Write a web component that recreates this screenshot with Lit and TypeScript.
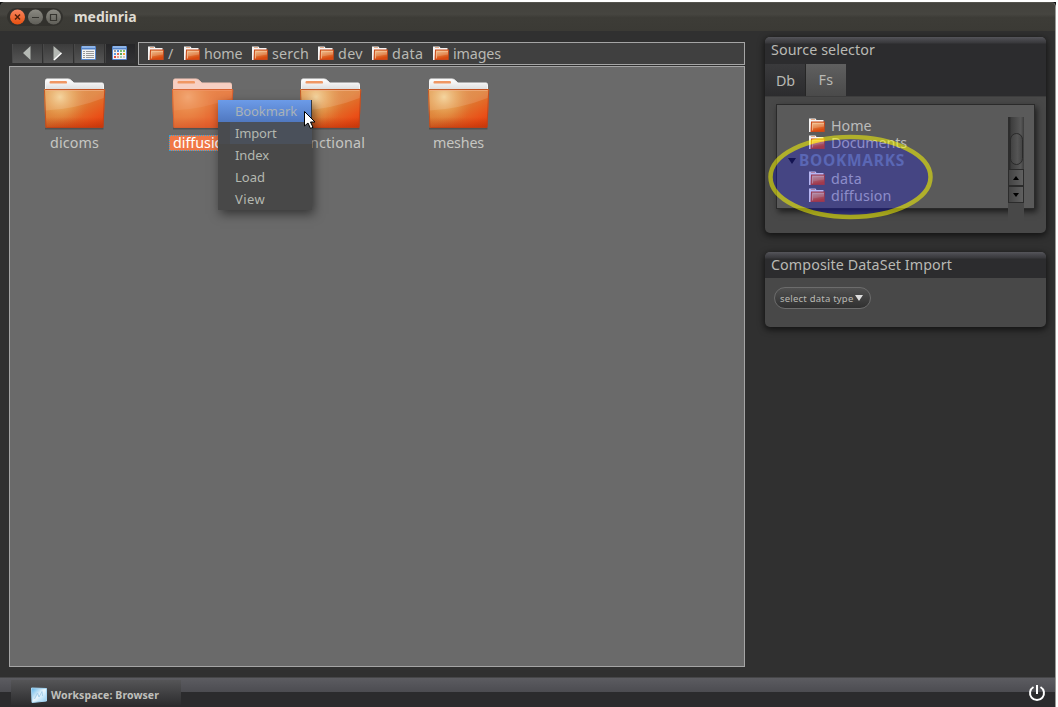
import { LitElement, html, css, svg, nothing } from "lit";
import { customElement, property } from "lit/decorators.js";

/* A single line of text whose tracking is adjusted to fill a given width. */
@customElement("fit-text")
class FitText extends LitElement {
  @property() text = "";
  @property({ type: Number }) w = 0;
  static styles = css`
    :host { display: inline-block; white-space: nowrap; flex: none; }
    .t { display: inline-block; white-space: pre; }
  `;
  updated() {
    const s = this.renderRoot.querySelector(".t") as HTMLElement;
    s.style.letterSpacing = "0px";
    const natural = s.getBoundingClientRect().width;
    s.style.letterSpacing = `${(this.w - natural) / this.text.length}px`;
  }
  render() {
    return html`<span class="t">${this.text}</span>`;
  }
}

@customElement("big-folder")
class BigFolder extends LitElement {
  @property({ type: Boolean }) selected = false;
  static styles = css`
    :host { display: block; width: 64px; height: 54px; margin-right: 1px; }
    svg { display: block; }
  `;
  render() {
    return html`<svg width="64" height="54" viewBox="0 0 64 54">
      <defs>
        <linearGradient id="l" x1="0" y1="0" x2="1" y2="1">
          <stop offset="0" stop-color="#d9913f" /><stop offset=".5" stop-color="#de7a31" />
          <stop offset=".8" stop-color="#ea4f17" /><stop offset="1" stop-color="#d93d0c" />
        </linearGradient>
        <radialGradient id="g" gradientUnits="userSpaceOnUse" cx="18" cy="20" r="30">
          <stop offset="0" stop-color="#f3cf92" /><stop offset=".5" stop-color="#e8a558" stop-opacity=".65" />
          <stop offset="1" stop-color="#e07a38" stop-opacity="0" />
        </radialGradient>
        <linearGradient id="d" x1="0" y1="0" x2="0" y2="1">
          <stop offset=".72" stop-color="#b02a05" stop-opacity="0" /><stop offset="1" stop-color="#b02a05" stop-opacity=".5" />
        </linearGradient>
        <linearGradient id="p" x1="0" y1="0" x2="0" y2="1">
          <stop offset="0" stop-color="#fff" /><stop offset="1" stop-color="#dcdcdc" />
        </linearGradient>
      </defs>
      <path d="M3 50.500H61.5V52.500H3Z" fill="#000" opacity=".22" />
      <path d="M3.500 13V3.500q0-1.500 1.500-1.500H26q2 0 3.300 1.500l2.600 2.500H60q1.500 0 1.500 1.500V13Z"
        fill=${this.selected ? "#f7cfc2" : "url(#p)"} stroke=${this.selected ? "#f7c8b8" : "#f5f5f5"} />
      <rect x="7.500" y="4" width="17.5" height="2.6" rx="1.2" fill="#f09763" />
      <path d="M2 13.3q-.1-1.3 1.2-1.3H62q1.3 0 1.2 1.3L61.500 49.500q-.1 1.500-1.500 1.500H5q-1.500 0-1.600-1.500Z" fill="url(#l)" />
      <path d="M2 13.3q-.1-1.3 1.2-1.3H62q1.3 0 1.2 1.3L61.500 49.500q-.1 1.500-1.500 1.500H5q-1.500 0-1.600-1.500Z" fill="url(#g)" />
      <path d="M2 13.3q-.1-1.3 1.2-1.3H62q1.3 0 1.2 1.3L61.500 49.500q-.1 1.500-1.500 1.500H5q-1.500 0-1.600-1.500Z" fill="url(#d)" />
      <path d="M3 13H62.300L61.700 21Q34 32 3.500 33.500Z" fill="#fff" opacity=".13" />
      <path d="M2.500 13.500q-.1-1 1-1H61.700q1.200 0 1 1L61 49.500q-.1 1-1.200 1H5.200q-1.200 0-1.300-1Z" fill="none"
        stroke="#b8411b" stroke-opacity=".75" />
      <path d="M4 13.500H61.500" stroke="#f2b184" opacity=".7" />
      ${this.selected
        ? svg`<path d="M2 13q0-1 1.200-1H62q1.200 0 1.200 1.300L61.500 49.500q0 1.500-1.500 1.500H5q-1.500 0-1.600-1.500Z" fill="#f07746" opacity=".5"/>`
        : nothing}
    </svg>`;
  }
}

@customElement("small-folder")
class SmallFolder extends LitElement {
  static styles = css`
    :host { display: block; width: 17px; height: 15px; flex: none; }
    svg { display: block; }
  `;
  render() {
    return html`<svg width="17" height="15" viewBox="0 0 17 15">
      <defs>
        <linearGradient id="a" x1="0" y1="0" x2=".3" y2="1">
          <stop offset="0" stop-color="#f0b77c" /><stop offset=".55" stop-color="#e07a3a" />
          <stop offset="1" stop-color="#d84a10" />
        </linearGradient>
      </defs>
      <path d="M0 14V.5H6.500L7.500 2H14.500V4H3V14Z" fill="#f4f4f4" />
      <path d="M2 1.500H6" stroke="#e9b08e" />
      <path d="M2 3.500H16L15.700 14H1.500Z" fill="#c9481a" />
      <path d="M3 4.500H15V13H2.500Z" fill="url(#a)" />
      <path d="M3.500 12.500V5.500H15" fill="none" stroke="#f6cda9" stroke-opacity=".65" />
      <path d="M4 6H15V8.500Q9 9.500 4 10.500Z" fill="#fff" opacity=".16" />
    </svg>`;
  }
}

@customElement("app-root")
class AppRoot extends LitElement {
  static styles = css`
    :host {
      display: block; position: relative; width: 1058px; height: 707px; overflow: hidden; background: #fff;
      font-family: "Noto Sans", "Open Sans", sans-serif; font-size: 14.300px; color: #b9b9b4;
    }
    * { box-sizing: border-box; }
    svg { display: block; flex: none; }
    .wrap { background: #111; width: 1056px; height: 705px; margin-top: 2px; }
    .window {
      width: 1056px; height: 705px; background: #303030; border-right: 1px solid #9a9a98;
      display: flex; flex-direction: column; border-radius: 5px 5px 0 0;
    }
    .title {
      height: 29px; flex: none; display: flex; align-items: center; padding: 0 0 1px 7px;
      background: linear-gradient(#43423d 0, #464540 40%, #3d3c37 52%, #3b3a35 100%);
      border-top: 1px solid #55544e; border-radius: 5px 5px 0 0;
    }
    .caps { width: 56px; height: 18px; border-radius: 9px; background: #32312d; padding: 1px 2px; }
    .name { font-weight: 700; font-size: 14px; color: #dfdbd2; margin-left: 11px; line-height: 18px; padding-top: 1px; }
    .body { flex: 1; min-height: 0; display: flex; padding: 6px 9px 0 9px; justify-content: space-between; }
    .left { width: 736px; padding-top: 5px; }
    .bar { display: flex; height: 24px; }
    .btns { width: 129px; display: flex; gap: 1px; padding: 2px 0 0 3px; }
    .btn {
      width: 30px; height: 19px; display: grid; place-items: center; padding-right: 2px;
      background: linear-gradient(#3c3c3c, #565656); border-left: 1px solid #484848;
    }
    .btn svg { margin-top: -1px; }
    .btn.on { background: linear-gradient(#262628, #333335); border-left-color: #444; }
    .path {
      flex: 1; border: 1px solid #a5a5a5; height: 23px; background: #404040; display: flex; align-items: center;
      padding-left: 9px; line-height: 20px;
    }
    .crumb { display: flex; align-items: center; gap: 3px; }
    .crumb small-folder { margin-top: -1px; }
    .crumb fit-text { padding-top: 1px; }
    .files {
      height: 601px; border: 1px solid #a5a5a5; background: #6a6a6a; display: grid;
      grid-template-columns: repeat(4, 128px); padding: 10px 0 0 0; align-content: start;
    }
    .file { display: flex; flex-direction: column; align-items: center; line-height: 16px; gap: 4px; color: #c6c6c2; }
    .lab { padding: 0 3px 0 4px; height: 16px; display: flex; align-items: center; }
    .lab.sel { background: #f07746; color: #fff; outline: 1px dotted #2ba5e0; outline-offset: -1px; }
    .right { width: 281px; display: flex; flex-direction: column; gap: 19px; }
    .panel {
      border-radius: 5px; background: #484848; box-shadow: 0 2px 6px 1px rgba(0, 0, 0, .6); overflow: hidden; flex: none;
    }
    .p1 { height: 196px; }
    .p2 { height: 75px; }
    .head {
      height: 26px; padding: 3px 0 0 6px; line-height: 20px; 
      background: linear-gradient(#55555a 0, #4a4a4f 2px, #38383b 6px, #2c2c2e 7px, #2c2c2e 100%);
    }
    .tabs { height: 34px; display: flex; background: #2c2c2e; border-bottom: 1px solid #3d3d3d; padding-top: 1px; }
    .tab { width: 41px; height: 32px; display: grid; place-items: center; line-height: 20px; padding-top: 1px;
      background: linear-gradient(#3a3a3c, #2c2c2e); }
    .tab.on { margin-left: -1px; background: linear-gradient(#606060, #4a4a4a); border-left: 1px solid #262626; padding: 0 0 1px; }
    .tree {
      margin: 7px 11px 0 11px; height: 105px; background: #5a5a5a; border: 1px solid #2a2a2a;
      box-shadow: 2px 3px 6px rgba(0, 0, 0, .6); display: flex; justify-content: space-between;
    }
    .rows { padding: 12px 0 0 32px; }
    .row { display: flex; align-items: center; gap: 5px; height: 17px; line-height: 17px; color: #bcbcbc; }
    .group { margin: 1px 0 1px -21px; gap: 3px; color: #76889e; font-weight: 700; font-size: 15.500px; }
    .scroll {
      width: 16px; height: 104px; margin: 12px 10px -12px 0; display: flex; flex-direction: column; flex: none;
      background: linear-gradient(90deg, #2c2c2c 0, #2c2c2c 2px, #3d3d3d 3px, #585858 80%, #3c3c3c 100%);
    }
    .thumb {
      height: 32px; margin: 16px 1px 4px 2px; border: 1px solid #2a2a2a; border-radius: 7px;
      background: linear-gradient(90deg, #424242, #555 60%, #454545);
    }
    .arrow { height: 17px; display: grid; place-items: center; border: 1px solid #2b2b2b; background: linear-gradient(90deg, #444, #606060); }
    .rest { flex: 1; background: #484848; }
    .combo {
      margin: 9px 0 0 9px; width: 97px; height: 22px; border: 1px solid #6c6c6c; border-radius: 11px; display: flex;
      align-items: center; padding: 1px 0 0 5px; gap: 2px; font-size: 9.500px; line-height: 14px;
      background: linear-gradient(#505050, #303030);
    }
    .combo svg { margin: -2px 0 0 -1px; }
    .foot {
      height: 30px; flex: none; display: flex; justify-content: space-between; padding: 3px 9px 0 11px;
      border-top: 1px solid #464648;
      background: linear-gradient(#5c5c61 0, #4c4c51 14px, #2b2b2d 14px);
    }
    .task {
      width: 170px; height: 25px; display: flex; align-items: center; gap: 4px; padding: 4px 0 0 20px; margin-top: -1px;
      background: linear-gradient(#555557, #2d2d2f); font-weight: 700; font-size: 10.500px; line-height: 16px; color: #c0c0bc;
    }
    .task fit-text { padding-top: 1px; }
    .power { margin-top: 3px; }
    .menu {
      position: absolute; left: 218px; top: 100px; width: 94px; height: 110px; background: #484848;
      box-shadow: 2px 4px 10px rgba(0, 0, 0, .5); font-size: 13px; line-height: 22px; color: #b4b8b0;
    }
    .item { height: 22px; padding-left: 17px; }
    .item.on { background: linear-gradient(#6c9be8, #5078c0); border-right: 1px solid #35373c; color: #a9b2b8; }
    .item.fade { background: linear-gradient(90deg, #494b4f 12px, #4a505a 12px); }
    .cursor { position: absolute; left: 303px; top: 110px; }
    .mark { position: absolute; left: 766px; top: 132px; }
  `;

  crumb(text: string, w: number, cell: number) {
    return html`<div class="crumb" style="width:${cell}px"><small-folder></small-folder><fit-text .text=${text} .w=${w}></fit-text></div>`;
  }
  file(text: string, w: number, sel = false) {
    return html`<div class="file"><big-folder ?selected=${sel}></big-folder>
      <div class="lab ${sel ? "sel" : ""}"><fit-text .text=${text} .w=${w}></fit-text></div></div>`;
  }
  row(text: string, w: number) {
    return html`<div class="row"><small-folder></small-folder><fit-text .text=${text} .w=${w}></fit-text></div>`;
  }

  render() {
    const dots = ["#999", "#4f8fe0", "#7ec06a", "#7ec06a", "#5b9be4", "#e06a50", "#58a85a", "#f0a030", "#e04a40", "#e8a090", "#a8cfa0", "#c8c8c8"];
    return html`
      <div class="wrap"><div class="window">
        <div class="title">
          <div class="caps"><svg width="54" height="16" viewBox="0 0 54 16">
            <defs>
              <linearGradient id="o" x1="0" y1="0" x2="0" y2="1"><stop offset="0" stop-color="#f98560" /><stop offset="1" stop-color="#e8500f" /></linearGradient>
              <linearGradient id="n" x1="0" y1="0" x2="0" y2="1"><stop offset="0" stop-color="#8b8a82" /><stop offset="1" stop-color="#5f5e58" /></linearGradient>
            </defs>
            <circle cx="8.500" cy="8" r="7.500" fill="url(#o)" /><circle cx="26.500" cy="8" r="7.500" fill="url(#n)" /><circle cx="44.500" cy="8" r="7.500" fill="url(#n)" />
            <path d="M6 5.500l5 5M11 5.500l-5 5" stroke="#53200c" stroke-width="1.500" />
            <path d="M23 8.500h7M41.500 5.500h6v6h-6Z" stroke="#35342f" fill="none" stroke-width="1.200" />
          </svg></div>
          <fit-text class="name" .text=${"medinria"} .w=${62.5}></fit-text>
        </div>
        <div class="body">
          <div class="left">
            <div class="bar">
              <div class="btns">
                <div class="btn"><svg width="8" height="14"><path d="M7.500 0V14L0 7Z" fill="#b5b9b4" /></svg></div>
                <div class="btn"><svg width="9" height="15"><path d="M.5 0V14.500L8.500 7Z" fill="#b5b9b4" /><path d="M1 14L8.500 7" stroke="#fff" stroke-width="1.500" /></svg></div>
                <div class="btn"><svg width="15" height="14"><rect width="15" height="14" rx="1" fill="#5585ca" /><rect x="1" y="0" width="13" height="2" fill="#8db4e8" /><rect x="1" y="3.500" width="13" height="9.500" fill="#f4f4f4" /><path d="M2 5.500H4M2 7.500H4M2 9.500H4M2 11.500H4M5 5.500H13M5 7.500H13M5 9.500H13M5 11.500H13" stroke="#999" /></svg></div>
                <div class="btn on"><svg width="15" height="14"><rect width="15" height="14" rx="1" fill="#5585ca" /><rect x="1" y="0" width="13" height="2" fill="#8db4e8" /><rect x="1" y="3.500" width="13" height="9.500" fill="#f4f4f4" />
                  ${dots.map((c, i) => svg`<rect x=${2 + (i % 4) * 3} y=${4 + Math.floor(i / 4) * 3} width="2" height="2" fill=${c} />`)}</svg></div>
              </div>
              <div class="path">
                ${this.crumb("/", 6, 36)}${this.crumb("home", 38.5, 68)}${this.crumb("serch", 37, 66)}${this.crumb("dev", 25, 54)}${this.crumb("data", 31.5, 61)}${this.crumb("images", 48, 70)}
              </div>
            </div>
            <div class="files">
              ${this.file("dicoms", 49)}${this.file("diffusion", 59, true)}${this.file("functional", 69)}${this.file("meshes", 51)}
            </div>
          </div>
          <div class="right">
            <div class="panel p1">
              <div class="head"><fit-text .text=${"Source selector"} .w=${104}></fit-text></div>
              <div class="tabs">
                <div class="tab"><fit-text .text=${"Db"} .w=${19}></fit-text></div>
                <div class="tab on"><fit-text .text=${"Fs"} .w=${15}></fit-text></div>
              </div>
              <div class="tree">
                <div class="rows">
                  ${this.row("Home", 40.5)}${this.row("Documents", 76)}
                  <div class="row group"><svg width="8" height="6"><path d="M0 0H8L4 6Z" fill="#151515" /></svg><fit-text .text=${"BOOKMARKS"} .w=${106}></fit-text></div>
                  ${this.row("data", 31)}${this.row("diffusion", 60.5)}
                </div>
                <div class="scroll">
                  <div class="thumb"></div>
                  <div class="arrow"><svg width="6" height="4"><path d="M0 4L3 0L6 4Z" fill="#000" /></svg></div>
                  <div class="arrow"><svg width="6" height="4"><path d="M0 0L3 4L6 0Z" fill="#000" /></svg></div>
                  <div class="rest"></div>
                </div>
              </div>
            </div>
            <div class="panel p2">
              <div class="head"><fit-text .text=${"Composite DataSet Import"} .w=${181}></fit-text></div>
              <div class="combo"><fit-text .text=${"select data type"} .w=${73.5}></fit-text><svg width="8" height="6"><path d="M0 0H8L4 6Z" fill="#ddd" /></svg></div>
            </div>
          </div>
        </div>
        <div class="foot">
          <div class="task">
            <svg width="16" height="16"><defs><linearGradient id="w" x1="0" y1="0" x2="1" y2="1"><stop offset="0" stop-color="#5fb4e8" /><stop offset=".5" stop-color="#e8f5fc" /><stop offset="1" stop-color="#8fcdf2" /></linearGradient></defs>
              <path d="M.5 1L15.500 1.500V14L1 15.500Z" fill="url(#w)" stroke="#a8d8f5" /><path d="M3.500 12L6.500 6L8 10L11 4.500L11.500 9" stroke="#a5cfea" fill="none" /></svg>
            <fit-text .text=${"Workspace: Browser"} .w=${108}></fit-text>
          </div>
          <svg class="power" width="18" height="18" viewBox="0 0 18 18"><path d="M5.500 3A7 7 0 1 0 12.500 3" fill="none" stroke="#fff" stroke-width="2" /><path d="M9 1V10" stroke="#fff" stroke-width="2" /></svg>
        </div>
      </div></div>
      <div class="menu">
        <div class="item on"><fit-text .text=${"Bookmark"} .w=${62}></fit-text></div>
        <div class="item fade"><fit-text .text=${"Import"} .w=${41.5}></fit-text></div>
        <div class="item"><fit-text .text=${"Index"} .w=${34}></fit-text></div>
        <div class="item"><fit-text .text=${"Load"} .w=${30}></fit-text></div>
        <div class="item"><fit-text .text=${"View"} .w=${30}></fit-text></div>
      </div>
      <svg class="cursor" width="14" height="20"><path d="M1.500 1.500V16L5 13L7.500 18.500L10 17.300L7.500 12H12Z" fill="#fff" stroke="#000" /></svg>
      <svg class="mark" width="170" height="90"><ellipse cx="84.500" cy="45" rx="78" ry="38" fill="rgba(15,15,245,.27)" /><ellipse cx="84.500" cy="45" rx="80" ry="40" fill="none" stroke="#ffff00" stroke-opacity=".52" stroke-width="4.500" /></svg>
    `;
  }
}
